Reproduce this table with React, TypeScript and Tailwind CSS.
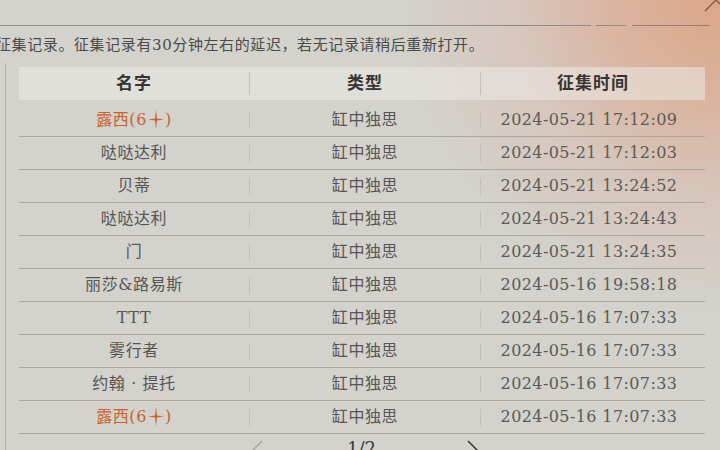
import React from 'react';

// 征集记录列表
type Row = { name: string; star?: boolean; type: string; time: string };

const ROWS: Row[] = [
  { name: '露西(6', star: true, type: '缸中独思', time: '2024-05-21 17:12:09' },
  { name: '哒哒达利', type: '缸中独思', time: '2024-05-21 17:12:03' },
  { name: '贝蒂', type: '缸中独思', time: '2024-05-21 13:24:52' },
  { name: '哒哒达利', type: '缸中独思', time: '2024-05-21 13:24:43' },
  { name: '门', type: '缸中独思', time: '2024-05-21 13:24:35' },
  { name: '丽莎&路易斯', type: '缸中独思', time: '2024-05-16 19:58:18' },
  { name: 'TTT', type: '缸中独思', time: '2024-05-16 17:07:33' },
  { name: '雾行者', type: '缸中独思', time: '2024-05-16 17:07:33' },
  { name: '约翰 · 提托', type: '缸中独思', time: '2024-05-16 17:07:33' },
  { name: '露西(6', star: true, type: '缸中独思', time: '2024-05-16 17:07:33' },
];

const FONT = "font-['DejaVu_Serif','Noto_Sans_CJK_SC',serif]";

function Star() {
  return (
    <svg width="16" height="19" viewBox="0 0 16 19" className="mx-[1px] -mt-[2px]">
      <path d="M8 0 L9 8.5 L16 9.5 L9 10.5 L8 19 L7 10.5 L0 9.5 L7 8.5 Z" fill="#c7672f" />
    </svg>
  );
}

function Divider({ h = 'h-[17px]' }: { h?: string }) {
  return <div className={`w-px ${h} bg-[#c2c0bb]`} />;
}

export default function App() {
  return (
    <div
      className={`relative w-[720px] h-[450px] overflow-hidden bg-[#d3d2cd] bg-[radial-gradient(ellipse_320px_320px_at_100%_0%,#dca589_0%,#dab49f_32%,#d7c6bc_62%,#d3d2cd_100%)] ${FONT}`}
    >
      {/* 关闭按钮残影 */}
      <svg width="20" height="14" viewBox="0 0 20 14" className="absolute right-0 top-0">
        <path d="M5 11 L16 0" stroke="#8a5a44" strokeWidth="1.5" fill="none" />
        <path d="M16 0 L20 4" stroke="#8a5a44" strokeWidth="1.5" fill="none" />
      </svg>

      {/* 顶部线 */}
      <div className="flex items-center pt-[25px] h-[26px]">
        <div className="w-[591px] h-px bg-[#8f8d8a]" />
        <div className="w-[5px]" />
        <div className="w-[30px] h-px bg-[#928a84]" />
        <div className="w-[6px]" />
        <div className="w-[78px] h-px bg-[#9a7d6e]" />
      </div>

      {/* 提示 */}
      <p className="mt-[9px] -ml-[4px] h-[20px] leading-[20px] text-[15px] tracking-[0.6px] text-[#4b4a47] whitespace-nowrap">
        征集记录。征集记录有30分钟左右的延迟，若无记录请稍后重新打开。
      </p>

      <div className="flex mt-[8px]">
        <div className="ml-[5px] w-px h-[400px] bg-[#b3b1ac]" />
        <div className="ml-[13px] w-[686px] pt-[4px]">
          {/* 表头 */}
          <div className="flex items-center h-[33px] bg-[#eceae6]/55 text-[17px] tracking-[1px] font-semibold text-[#353432]">
            <div className="w-[230px] text-center">名字</div>
            <Divider h="h-[23px]" />
            <div className="w-[230px] text-center">类型</div>
            <Divider h="h-[23px]" />
            <div className="flex-1 text-center">征集时间</div>
          </div>

          <div className="mt-[4px]">
            {ROWS.map((r, i) => (
              <div key={i} className="flex items-center h-[33px] border-b border-[#a9a8a3] text-[16px] text-[#575653]">
                <div className="w-[230px] flex justify-center items-center tracking-[0.6px]">
                  {r.star ? (
                    <span className="flex items-center text-[#c4652f]">
                      {r.name}
                      <Star />)
                    </span>
                  ) : (
                    r.name
                  )}
                </div>
                <Divider />
                <div className="w-[230px] text-center tracking-[0.6px]">{r.type}</div>
                <Divider />
                <div className="flex-1 text-center text-[16px] tracking-[0.4px] text-[#5b5a57] pr-[8px]">{r.time}</div>
              </div>
            ))}
          </div>

          {/* 分页 */}
          <div className="flex items-start h-[20px] pt-[5px] text-[18px] text-[#3c3b39]">
            <svg width="16" height="30" viewBox="0 0 16 30" className="ml-[229px] mt-[1px]">
              <path d="M14 1 L2 13 L14 25" stroke="#a8a6a1" strokeWidth="1.5" fill="none" />
            </svg>
            <div className="ml-[83px] leading-[20px]">1/2</div>
            <svg width="16" height="30" viewBox="0 0 16 30" className="ml-[90px] mt-[1px]">
              <path d="M2 1 L14 13 L2 25" stroke="#3a3936" strokeWidth="1.5" fill="none" />
            </svg>
          </div>
        </div>
      </div>
    </div>
  );
}
